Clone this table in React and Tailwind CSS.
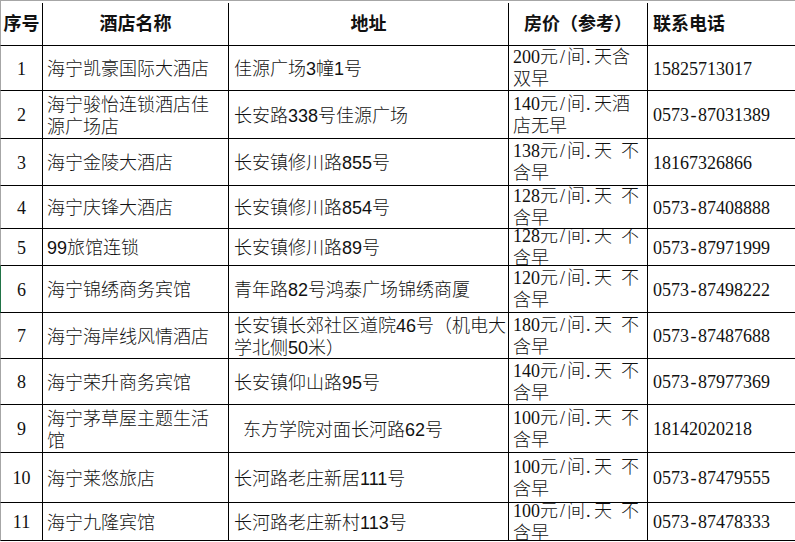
import React from 'react';

const SANS = { fontFamily: '"Liberation Sans", "Noto Sans CJK SC", sans-serif' };
const SERIF = { fontFamily: '"Liberation Serif", "Noto Sans CJK SC", serif' };

const rows = [
  { h: 'h-[45px]', no: '1', name: ['海宁凯豪国际大酒店'], addr: ['佳源广场3幢1号'], price: ['200元/间.天含', '双早'], tel: '15825713017' },
  { h: 'h-[48px]', no: '2', name: ['海宁骏怡连锁酒店佳', '源广场店'], addr: ['长安路338号佳源广场'], price: ['140元/间.天酒', '店无早'], tel: '0573-87031389' },
  { h: 'h-[47px]', no: '3', name: ['海宁金陵大酒店'], addr: ['长安镇修川路855号'], price: ['138元/间.天 不', '含早'], tel: '18167326866' },
  { h: 'h-[43px]', no: '4', name: ['海宁庆锋大酒店'], addr: ['长安镇修川路854号'], price: ['128元/间.天 不', '含早'], tel: '0573-87408888' },
  { h: 'h-[37px]', no: '5', name: ['99旅馆连锁'], addr: ['长安镇修川路89号'], price: ['128元/间.天 不', '含早'], tel: '0573-87971999' },
  { h: 'h-[47px]', no: '6', name: ['海宁锦绣商务宾馆'], addr: ['青年路82号鸿泰广场锦绣商厦'], price: ['120元/间.天 不', '含早'], tel: '0573-87498222', green: true },
  { h: 'h-[46px]', no: '7', name: ['海宁海岸线风情酒店'], addr: ['长安镇长郊社区道院46号（机电大', '学北侧50米）'], price: ['180元/间.天 不', '含早'], tel: '0573-87487688' },
  { h: 'h-[46px]', no: '8', name: ['海宁荣升商务宾馆'], addr: ['长安镇仰山路95号'], price: ['140元/间.天 不', '含早'], tel: '0573-87977369' },
  { h: 'h-[48px]', no: '9', name: ['海宁茅草屋主题生活', '馆'], addr: ['\u2002东方学院对面长河路62号'], price: ['100元/间.天 不', '含早'], tel: '18142020218' },
  { h: 'h-[50px]', no: '10', name: ['海宁莱悠旅店'], addr: ['长河路老庄新居111号'], price: ['100元/间.天 不', '含早'], tel: '0573-87479555' },
  { h: 'h-[38px]', no: '11', name: ['海宁九隆宾馆'], addr: ['长河路老庄新村113号'], price: ['100元/间.天 不', '含早'], tel: '0573-87478333' },
];

// half-width punctuation like the Song font in the sheet
function Half({ text }) {
  return (
    <>
      {text.split('').map((c, i) =>
        c === '/' || c === '.' || c === ' ' || c === '-' ? (
          <span key={i} className={`inline-block w-[9px] ${c === '.' ? 'text-left pl-[1px]' : 'text-center'}`}>
            {c === ' ' ? '\u00a0' : c}
          </span>
        ) : (
          <React.Fragment key={i}>{c}</React.Fragment>
        )
      )}
    </>
  );
}

function Lines({ lines, half }) {
  return (
    <div className="leading-[22px] whitespace-pre">
      {lines.map((l, i) => (
        <div key={i}>{half ? <Half text={l} /> : l}</div>
      ))}
    </div>
  );
}

export default function App() {
  return (
    <div className="w-[795px] h-[542px] overflow-hidden bg-white text-[#111] text-[18px]">
      <div className="w-[900px]">
        {/* header */}
        <div className="flex h-[46px] border-t border-l border-b border-t-[#a6a6a6] border-l-[#a6a6a6] border-b-black font-bold leading-[22px] pt-[2px]" style={SERIF}>
          <div className="w-[42px] shrink-0 border-r border-black flex items-center justify-center">序号</div>
          <div className="w-[186px] shrink-0 border-r border-black flex items-center justify-center">酒店名称</div>
          <div className="w-[280px] shrink-0 border-r border-black flex items-center justify-center">地址</div>
          <div className="w-[139px] shrink-0 border-r border-black flex items-center justify-center">房价（参考）</div>
          <div className="flex-1 flex items-center pl-[5px]">联系电话</div>
        </div>

        {rows.map((r) => (
          <div
            key={r.no}
            className={`flex ${r.h} border-l border-b border-b-black font-light ${r.green ? 'border-l-[#217346]' : 'border-l-[#a6a6a6]'}`}
          >
            <div className="w-[42px] shrink-0 border-r border-black flex items-center justify-center overflow-hidden pt-[2px] font-normal" style={SERIF}>
              {r.no}
            </div>
            <div className="w-[186px] shrink-0 border-r border-black flex items-center pl-[4px] pt-[2px] overflow-hidden" style={SANS}>
              <Lines lines={r.name} />
            </div>
            <div className="w-[280px] shrink-0 border-r border-black flex items-center pl-[5px] pt-[2px] overflow-hidden" style={SANS}>
              <Lines lines={r.addr} />
            </div>
            <div className="w-[139px] shrink-0 border-r border-black flex items-center pl-[4px] overflow-hidden" style={SERIF}>
              <Lines lines={r.price} half />
            </div>
            <div className="flex-1 flex items-center pl-[5px] pt-[2px] overflow-hidden font-normal" style={SERIF}>
              <Half text={r.tel} />
            </div>
          </div>
        ))}
      </div>
    </div>
  );
}
